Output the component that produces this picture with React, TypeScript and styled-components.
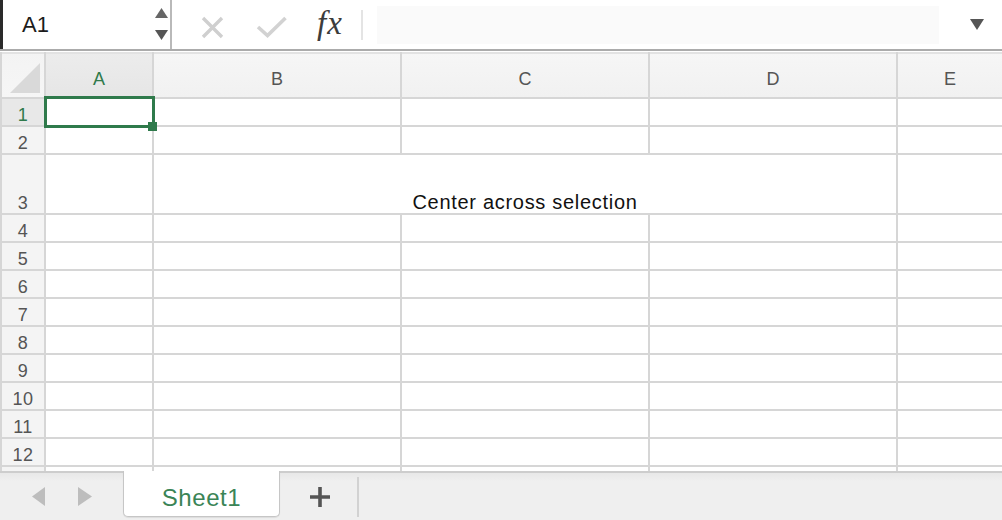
import React from "react";
import styled, { createGlobalStyle } from "styled-components";

const GlobalStyle = createGlobalStyle`
  html, body { margin: 0; padding: 0; background: #ffffff; }
  body { font-family: "Liberation Sans", Arial, sans-serif; overflow: hidden; }
`;

const GREEN = "#2f7a4b";

const Window = styled.div`
  width: 1002px;
  height: 520px;
  display: flex;
  flex-direction: column;
  overflow: hidden;
  background: #ffffff;
`;

const Toolbar = styled.div`
  flex: none;
  height: 49px;
  display: flex;
  align-items: stretch;
  border-bottom: 2px solid #ababab;
`;

const NameBox = styled.div`
  box-sizing: border-box;
  width: 170px;
  border-left: 3px solid #2a2a2a;
  padding: 0 2px 0 19px;
  display: flex;
  align-items: center;
  justify-content: space-between;
  font-size: 22px;
  color: #1c1c1c;
`;

const Spinner = styled.svg`
  display: block;
`;

const ToolSeparator = styled.div`
  width: 2px;
  background: #b9b9b9;
`;

const FormulaTools = styled.div`
  flex: 1;
  display: flex;
  align-items: center;
`;

const ToolIcon = styled.svg<{ $ml: number }>`
  display: block;
  flex: none;
  margin-left: ${(p) => p.$ml}px;
`;

const Fx = styled.span`
  flex: none;
  width: 30px;
  margin-left: 28px;
  font-family: "Liberation Serif", "Times New Roman", serif;
  font-style: italic;
  font-size: 33px;
  color: #3c3c3c;
  letter-spacing: 1px;
  line-height: 30px;
  margin-top: -3px;
`;

const ThinDivider = styled.div`
  flex: none;
  width: 2px;
  height: 30px;
  margin-left: 14px;
  background: #e4e4e4;
`;

const FormulaInput = styled.div`
  flex: none;
  width: 562px;
  height: 38px;
  margin-left: 14px;
  background: #fafafa;
`;

const Sheet = styled.div`
  flex: none;
  margin-top: 1px;
  display: grid;
  grid-template-columns: 42px 106px 246px 246px 246px 1fr;
  grid-template-rows: 45px 26px 26px 58px repeat(9, 26px) 4px;
  gap: 2px;
  padding-left: 2px;
  background: #d6d6d6;
`;

const Corner = styled.div`
  background: linear-gradient(#f3f3f3, #f6f6f6);
  box-shadow: inset 0 2px 0 #e2e2e2;
  display: flex;
  align-items: flex-end;
  justify-content: flex-end;
  padding: 0 4px 4px 0;
`;

const ColumnHeader = styled.div<{ $selected?: boolean }>`
  background: ${(p) =>
    p.$selected
      ? "linear-gradient(#ececec, #e6e6e6)"
      : "linear-gradient(#f6f6f6, #f1f1f1)"};
  box-shadow: inset 0 2px 0 #e2e2e2;
  display: flex;
  align-items: center;
  justify-content: center;
  padding-top: 8px;
  box-sizing: border-box;
  font-size: 18px;
  line-height: 20px;
  color: ${(p) => (p.$selected ? GREEN : "#555555")};
`;

const RowHeader = styled.div<{ $selected?: boolean }>`
  background: ${(p) => (p.$selected ? "#e8e8e8" : "#f4f4f4")};
  display: flex;
  align-items: flex-end;
  justify-content: center;
  font-size: 18px;
  line-height: 20px;
  letter-spacing: 0.5px;
  overflow: hidden;
  color: ${(p) => (p.$selected ? GREEN : "#555555")};
`;

const Cell = styled.div`
  position: relative;
  background: #ffffff;
`;

const SpanCell = styled.div`
  grid-column: span 3;
  background: #ffffff;
  display: flex;
  align-items: flex-end;
  justify-content: center;
  font-size: 20px;
  line-height: 22px;
  letter-spacing: 0.7px;
  color: #111111;
`;

const Selection = styled.div`
  position: absolute;
  top: -3px;
  left: -2px;
  right: -3px;
  bottom: -3px;
  border: 3px solid ${GREEN};
  z-index: 2;
`;

const FillHandle = styled.div`
  position: absolute;
  right: -5px;
  bottom: -6px;
  width: 9px;
  height: 9px;
  background: ${GREEN};
`;

const TabBar = styled.div`
  flex: 1;
  display: flex;
  align-items: stretch;
  border-top: 2px solid #cdcdcd;
  background: linear-gradient(#e8e8e8, #efefef 8px, #efefef);
`;

const NavArrows = styled.div`
  display: flex;
  align-items: center;
  gap: 33px;
  padding-left: 32px;
`;

const SheetTab = styled.div`
  box-sizing: border-box;
  width: 157px;
  height: 46px;
  margin: -2px 0 0 31px;
  background: #ffffff;
  border: 1px solid #c6c6c6;
  border-top: none;
  border-radius: 0 0 5px 5px;
  box-shadow: 0 1px 1px rgba(0, 0, 0, 0.08);
  display: flex;
  align-items: center;
  justify-content: center;
  padding-top: 8px;
  font-size: 24px;
  line-height: 28px;
  letter-spacing: 0.6px;
  color: #3a8456;
`;

const AddButton = styled.div`
  width: 77px;
  display: flex;
  align-items: center;
  justify-content: center;
  padding-left: 3px;
  box-sizing: border-box;
`;

const TabDivider = styled.div`
  align-self: center;
  width: 2px;
  height: 40px;
  background: #d2d2d2;
`;

const columns = ["A", "B", "C", "D", "E"];
const rows = [1, 2, 3, 4, 5, 6, 7, 8, 9, 10, 11, 12];

export default function App() {
  return (
    <>
      <GlobalStyle />
      <Window>
        <Toolbar>
          <NameBox>
            <span>A1</span>
            <Spinner width="13" height="33" viewBox="0 0 13 33">
              <polygon points="6.5,0 13,10 0,10" fill="#666" />
              <polygon points="0,22 13,22 6.5,32" fill="#555" />
            </Spinner>
          </NameBox>
          <ToolSeparator />
          <FormulaTools>
            <ToolIcon $ml={26} width="30" height="49" viewBox="0 0 30 49">
              <path d="M5 18 L24 37 M24 18 L5 37" stroke="#cfcfcf" strokeWidth="3.4" fill="none" />
            </ToolIcon>
            <ToolIcon $ml={27} width="34" height="49" viewBox="0 0 34 49">
              <path d="M3 27 L12.5 35.5 L30.5 18" stroke="#d2d2d2" strokeWidth="3.6" fill="none" />
            </ToolIcon>
            <Fx>fx</Fx>
            <ThinDivider />
            <FormulaInput />
            <ToolIcon $ml={31} width="14" height="11" viewBox="0 0 14 11">
              <polygon points="0,0 14,0 7,11" fill="#555" />
            </ToolIcon>
          </FormulaTools>
        </Toolbar>

        <Sheet>
          <Corner>
            <svg width="30" height="30" viewBox="0 0 30 30">
              <polygon points="0,30 30,0 30,30" fill="#d9d9d9" />
            </svg>
          </Corner>
          {columns.map((c) => (
            <ColumnHeader key={c} $selected={c === "A"}>
              {c}
            </ColumnHeader>
          ))}
          {rows.map((r) => (
            <React.Fragment key={r}>
              <RowHeader $selected={r === 1}>{r}</RowHeader>
              {r === 3 ? (
                <>
                  <Cell />
                  <SpanCell>Center across selection</SpanCell>
                  <Cell />
                </>
              ) : (
                columns.map((c) => (
                  <Cell key={c}>
                    {r === 1 && c === "A" && (
                      <Selection>
                        <FillHandle />
                      </Selection>
                    )}
                  </Cell>
                ))
              )}
            </React.Fragment>
          ))}
          <RowHeader />
          {columns.map((c) => (
            <Cell key={"last" + c} />
          ))}
        </Sheet>

        <TabBar>
          <NavArrows>
            <svg width="13" height="19" viewBox="0 0 13 19">
              <polygon points="13,0 13,19 0,9.5" fill="#bdbdbd" />
            </svg>
            <svg width="14" height="19" viewBox="0 0 14 19">
              <polygon points="0,0 14,9.5 0,19" fill="#bdbdbd" />
            </svg>
          </NavArrows>
          <SheetTab>Sheet1</SheetTab>
          <AddButton>
            <svg width="20" height="20" viewBox="0 0 20 20">
              <path d="M10 0 V20 M0 10 H20" stroke="#555" strokeWidth="3.6" fill="none" />
            </svg>
          </AddButton>
          <TabDivider />
        </TabBar>
      </Window>
    </>
  );
}
